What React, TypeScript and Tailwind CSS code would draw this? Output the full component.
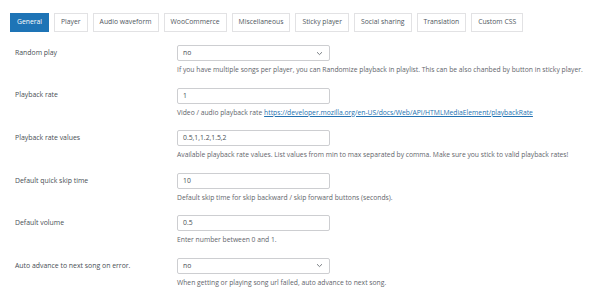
import React from 'react';

const tabs = ['General', 'Player', 'Audio waveform', 'WooCommerce', 'Miscellaneous', 'Sticky player', 'Social sharing', 'Translation', 'Custom CSS'];

type Row = {
  label: string;
  value: string;
  select?: boolean;
  desc: React.ReactNode;
};

const rows: Row[] = [
  {
    label: 'Random play',
    value: 'no',
    select: true,
    desc: 'If you have multiple songs per player, you can Randomize playback in playlist. This can be also chanbed by button in sticky player.',
  },
  {
    label: 'Playback rate',
    value: '1',
    desc: (
      <>
        Video / audio playback rate{' '}
        <a href="#" className="text-[#2271b1] underline">
          https://developer.mozilla.org/en-US/docs/Web/API/HTMLMediaElement/playbackRate
        </a>
      </>
    ),
  },
  {
    label: 'Playback rate values',
    value: '0.5,1,1.2,1.5,2',
    desc: 'Available playback rate values. List values from min to max separated by comma. Make sure you stick to valid playback rates!',
  },
  {
    label: 'Default quick skip time',
    value: '10',
    desc: 'Default skip time for skip backward / skip forward buttons (seconds).',
  },
  { label: 'Default volume', value: '0.5', desc: 'Enter number between 0 and 1.' },
  {
    label: 'Auto advance to next song on error.',
    value: 'no',
    select: true,
    desc: 'When getting or playing song url failed, auto advance to next song.',
  },
];

const App = () => {
  return (
    <div className="w-[590px] h-[300px] overflow-hidden bg-white font-['Open_Sans',sans-serif]">
      <div className="flex gap-[5px] pl-[10px] pt-[13px]">
        {tabs.map((tab, i) => (
          <div
            key={tab}
            className={`h-[19px] px-[6px] flex items-center text-[6.8px] border ${
              i === 0 ? 'bg-[#1e74b6] border-[#1e74b6] text-white' : 'bg-white border-[#e2e2e4] text-[#50575e]'
            }`}
          >
            {tab}
          </div>
        ))}
      </div>

      <div className="pt-[13px]">
        {rows.map((row) => (
          <div key={row.label} className="flex h-[42.6px]">
            <div className="w-[177px] pl-[15px] h-[16px] flex items-center text-[6.9px] text-[#484e54]">{row.label}</div>
            <div>
              <div className="w-[153px] h-[16px] border border-[#cdced1] rounded-[2px] bg-white flex items-center justify-between px-[5px] text-[6.8px] text-[#484e54]">
                <span>{row.value}</span>
                {row.select && (
                  <svg width="7" height="5" viewBox="0 0 7 5" className="mr-[1px]">
                    <path d="M1 1.2 L3.5 3.6 L6 1.2" fill="none" stroke="#6b7075" strokeWidth="0.9" />
                  </svg>
                )}
              </div>
              <div className="mt-[4px] text-[6.75px] leading-[9px] text-[#5f656b] whitespace-nowrap">{row.desc}</div>
            </div>
          </div>
        ))}
      </div>
    </div>
  );
};

export default App;
